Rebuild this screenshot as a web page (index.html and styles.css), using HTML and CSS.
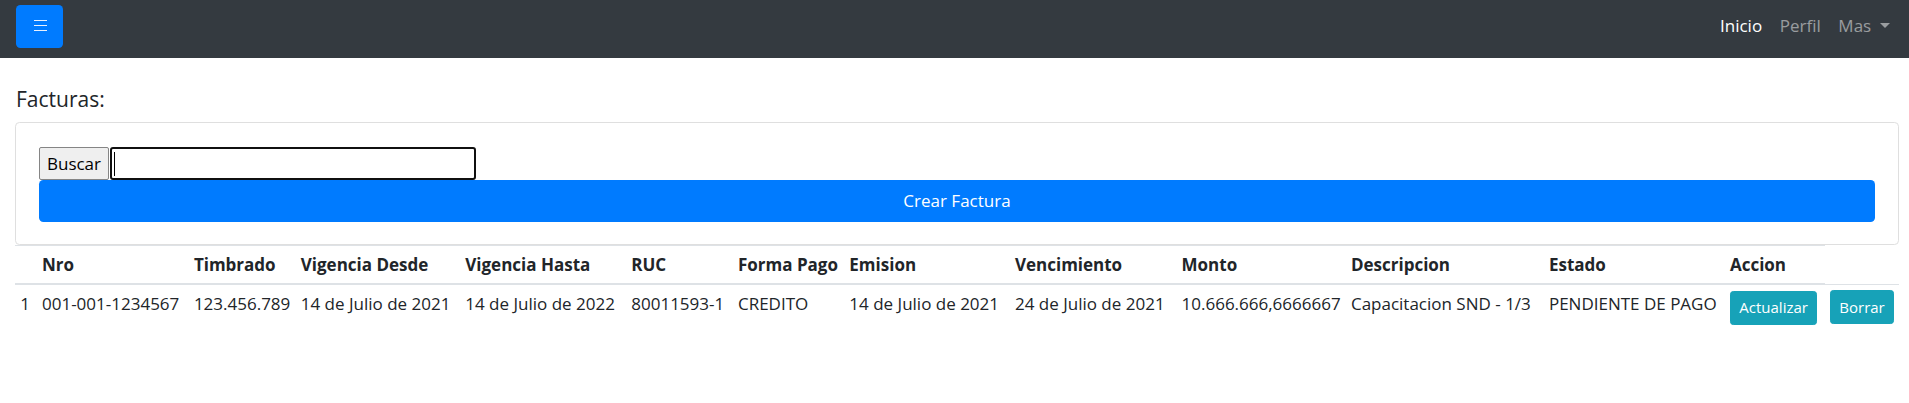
FILE: index.html
```html
<!DOCTYPE html>
<html lang="es">
<head>
<meta charset="utf-8">
<title>Facturas</title>
<link rel="stylesheet" href="styles.css">
</head>
<body>
<nav class="navbar">
  <button class="toggler" type="button" aria-label="Menu">
    <svg width="13" height="11" viewBox="0 0 13 11" aria-hidden="true">
      <path d="M0 0.5H13M0 5.5H13M0 10.5H13" stroke="#e8f1ff" stroke-width="1"/>
    </svg>
  </button>
  <ul class="nav-links">
    <li class="nav-link active">Inicio</li>
    <li class="nav-link">Perfil</li>
    <li class="nav-link">Mas<span class="caret"></span></li>
  </ul>
</nav>
<main class="content">
  <h5 class="title">Facturas:</h5>
  <div class="card">
    <div class="search">
      <button class="btn-buscar" type="button">Buscar</button>
      <span class="search-field"><input class="search-input" type="text"></span>
    </div>
    <button class="btn-crear" type="button">Crear Factura</button>
  </div>
  <table class="table">
    <colgroup>
      <col class="c0"><col class="c1"><col class="c2"><col class="c3"><col class="c4"><col class="c5"><col class="c6"><col class="c7"><col class="c8"><col class="c9"><col class="c10"><col class="c11"><col class="c12"><col class="c13">
    </colgroup>
    <thead>
      <tr>
        <th></th>
        <th>Nro</th>
        <th>Timbrado</th>
        <th>Vigencia Desde</th>
        <th>Vigencia Hasta</th>
        <th>RUC</th>
        <th>Forma Pago</th>
        <th>Emision</th>
        <th>Vencimiento</th>
        <th>Monto</th>
        <th>Descripcion</th>
        <th>Estado</th>
        <th>Accion</th>
      </tr>
    </thead>
    <tbody>
      <tr>
        <td>1</td>
        <td>001-001-1234567</td>
        <td>123.456.789</td>
        <td>14 de Julio de 2021</td>
        <td>14 de Julio de 2022</td>
        <td>80011593-1</td>
        <td>CREDITO</td>
        <td>14 de Julio de 2021</td>
        <td>24 de Julio de 2021</td>
        <td>10.666.666,6666667</td>
        <td>Capacitacion SND - 1/3</td>
        <td>PENDIENTE DE PAGO</td>
        <td><button class="btn-info" type="button">Actualizar</button></td>
        <td><button class="btn-info" type="button">Borrar</button></td>
      </tr>
    </tbody>
  </table>
</main>
</body>
</html>
```

FILE: styles.css
```css
* { box-sizing: border-box; }

body {
  margin: 0;
  font-family: "Open Sans", "Segoe UI", sans-serif;
  font-size: 17px;
  line-height: 26.4px;
  color: #212529;
  background: #fff;
}

.navbar {
  height: 58px;
  background: #343a40;
  display: flex;
  align-items: center;
  justify-content: space-between;
  padding: 5px 10px 10px 16px;
}

.toggler {
  width: 47px;
  height: 43px;
  padding: 0 0 2px 1px;
  border: 0;
  border-radius: 4.4px;
  background: #007bff;
  display: flex;
  align-items: center;
  justify-content: center;
}

.toggler svg { display: block; }

.nav-links {
  display: flex;
  list-style: none;
  margin: 0;
  padding: 0;
}

.nav-link {
  padding: 0 8.8px;
  color: rgba(255, 255, 255, 0.5);
}

.nav-link.active { color: #fff; }

.caret {
  display: inline-block;
  margin-left: 9px;
  vertical-align: 0.26em;
  border-top: 5.3px solid;
  border-left: 5.3px solid transparent;
  border-right: 5.3px solid transparent;
}

.content {
  padding: 28px 10px 0 15px;
}

.title {
  margin: 0 0 10px 1px;
  font-size: 21px;
  font-weight: 500;
  line-height: 26.4px;
}

.card {
  border: 1px solid #dfdfdf;
  border-radius: 4.4px;
  padding: 24px 23px 22px;
}

.search {
  display: flex;
  height: 33px;
}

.btn-buscar {
  width: 70px;
  height: 33px;
  padding: 0;
  font: inherit;
  color: #000;
  background: #efefef;
  border: 1px solid #858585;
  border-radius: 2px;
}

.search-field {
  position: relative;
  margin-left: 1px;
  width: 366px;
}

.search-field::after {
  content: "";
  position: absolute;
  left: 4px;
  top: 5px;
  width: 1px;
  height: 24px;
  background: #000;
}

.search-input {
  width: 100%;
  height: 33px;
  padding: 0 4px;
  font: inherit;
  border: 2px solid #101010;
  border-radius: 3px;
  outline: none;
}

.btn-crear {
  display: block;
  width: 100%;
  height: 42px;
  font: inherit;
  color: #fff;
  background: #007bff;
  border: 0;
  border-radius: 4.4px;
}

.table {
  width: 100%;
  table-layout: fixed;
  border-collapse: collapse;
}

.c0 { width: 21.7px; }
.c1 { width: 151.9px; }
.c2 { width: 106.9px; }
.c3 { width: 164.5px; }
.c4 { width: 166px; }
.c5 { width: 106.7px; }
.c6 { width: 111.4px; }
.c7 { width: 165.6px; }
.c8 { width: 166.6px; }
.c9 { width: 169.4px; }
.c10 { width: 198px; }
.c11 { width: 181px; }
.c12 { width: 100px; }
.c13 { width: 74.3px; }

.table th,
.table td {
  padding: 5.3px;
  text-align: left;
  line-height: 26.4px;
  white-space: nowrap;
}

.table th {
  vertical-align: bottom;
  font-weight: 700;
  border-top: 1px solid #dee2e6;
  border-bottom: 2px solid #dee2e6;
}

.table td {
  vertical-align: top;
  border-top: 1px solid #dee2e6;
}

.btn-info {
  font: inherit;
  font-size: 15px;
  line-height: 23.1px;
  padding: 4.4px 8.4px;
  color: #fff;
  background: #17a2b8;
  border: 1px solid #17a2b8;
  border-radius: 3.3px;
}
```
